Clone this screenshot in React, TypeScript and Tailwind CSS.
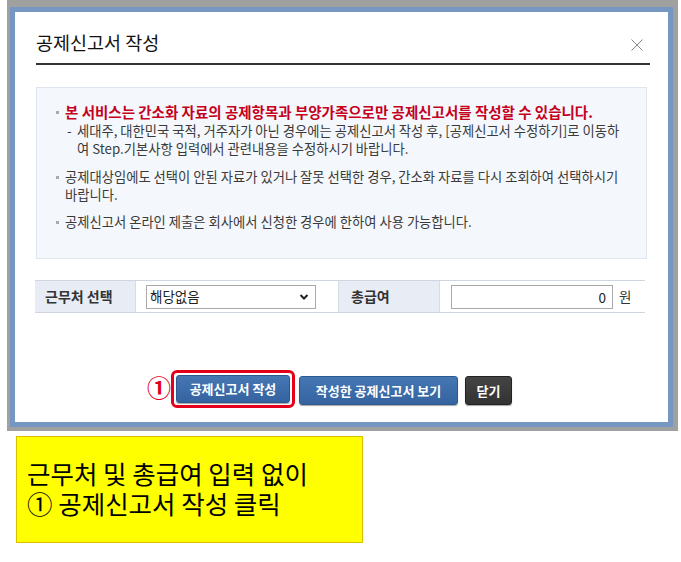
import React from "react";

const font = { fontFamily: '"Noto Sans CJK KR", "Noto Sans", sans-serif' };

export default function App() {
  return (
    <div className="w-[681px] h-[562px] bg-white overflow-hidden" style={font}>
      {/* dimmed page backdrop */}
      <div className="ml-[7px] w-[671px] h-[431px] bg-[#a0a0a0] pt-[7px] pl-[3px]">
        {/* modal */}
        <div className="w-[663px] h-[420px] border-[5px] border-[#7597c1] bg-white flex flex-col">
          {/* header */}
          <div className="h-[51px] flex justify-between items-start pl-[21px] pr-[25px] pt-[19px]">
            <div className="text-[18.5px] leading-[22px] text-[#111]">공제신고서 작성</div>
            <svg width="12" height="12" viewBox="0 0 12 12" className="mt-[8px]">
              <path d="M0.5 0.5 L11.5 11.5 M11.5 0.5 L0.5 11.5" stroke="#8a8a8a" strokeWidth="1" fill="none" />
            </svg>
          </div>
          <div className="ml-[21px] w-[614px] h-[2px] bg-[#333]" />

          {/* info box */}
          <div className="ml-[21px] mt-[22px] w-[611px] h-[172px] bg-[#f4f7fb] border border-[#dfe5ec] pt-[14px] pl-[19px] text-[13.3px] leading-[18px] text-[#3a3a3a]">
            <div className="flex">
              <span className="w-[3px] h-[3px] bg-[#aaa] mt-[9px] mr-[6px] shrink-0" />
              <div>
                <div className="text-[#c4001d] font-bold text-[14.5px] leading-[20px] whitespace-nowrap">
                  본 서비스는 간소화 자료의 공제항목과 부양가족으로만 공제신고서를 작성할 수 있습니다.
                </div>
                <div className="flex pl-[2px] whitespace-nowrap">
                  <span className="w-[10px] shrink-0">-</span>
                  <div>
                    세대주, 대한민국 국적, 거주자가 아닌 경우에는 공제신고서 작성 후, [공제신고서 수정하기]로 이동하
                    <br />
                    여 Step.기본사항 입력에서 관련내용을 수정하시기 바랍니다.
                  </div>
                </div>
              </div>
            </div>
            <div className="flex mt-[10px]">
              <span className="w-[3px] h-[3px] bg-[#aaa] mt-[8px] mr-[6px] shrink-0" />
              <div className="whitespace-nowrap">
                공제대상임에도 선택이 안된 자료가 있거나 잘못 선택한 경우, 간소화 자료를 다시 조회하여 선택하시기
                <br />
                바랍니다.
              </div>
            </div>
            <div className="flex mt-[9px]">
              <span className="w-[3px] h-[3px] bg-[#aaa] mt-[8px] mr-[6px] shrink-0" />
              <div className="whitespace-nowrap">
                공제신고서 온라인 제출은 회사에서 신청한 경우에 한하여 사용 가능합니다.
              </div>
            </div>
          </div>

          {/* table row */}
          <div className="ml-[20px] mt-[21px] w-[610px] h-[33px] border-y border-[#cfd6df] flex text-[14px] text-[#333]">
            <div className="w-[101px] bg-[#e8edf5] flex items-center pl-[10px] font-bold border-r border-[#d6dce4]">
              근무처 선택
            </div>
            <div className="w-[203px] flex items-center pl-[10px] border-r border-[#d6dce4]">
              <div className="relative w-[170px] h-[24px]">
                <select
                  defaultValue="none"
                  className="appearance-none w-full h-full border border-[#a9a9a9] bg-white pl-[3px] text-[13.5px] text-[#222] outline-none"
                  style={font}
                >
                  <option value="none">해당없음</option>
                </select>
                <svg width="10" height="8" viewBox="0 0 10 8" className="absolute right-[7px] top-[8px] pointer-events-none">
                  <path d="M1.5 2 L5 5.5 L8.5 2" stroke="#222" strokeWidth="2" fill="none" />
                </svg>
              </div>
            </div>
            <div className="w-[101px] bg-[#e8edf5] flex items-center pl-[12px] font-bold border-r border-[#d6dce4]">
              총급여
            </div>
            <div className="flex-1 flex items-center pl-[11px]">
              <input
                readOnly
                value="0"
                className="w-[162px] h-[24px] border border-[#a9a9a9] text-right pr-[6px] text-[13.5px] text-[#222] outline-none"
                style={font}
              />
              <span className="ml-[6px] text-[13.5px] text-[#333]">원</span>
            </div>
          </div>

          {/* buttons */}
          <div className="mt-[57px] flex justify-center items-start">
            <div className="relative border-[3px] border-[#e3001b] rounded-[6px] p-[2px]">
              <span className="absolute right-full mr-[3px] top-[-1px] text-[#e3001b] font-bold text-[24px] leading-[30px]">
                ①
              </span>
              <button className="w-[114px] h-[28px] rounded-[3px] bg-gradient-to-b from-[#4677b3] to-[#3463a0] border border-[#2c5990] shadow-[0_1px_1px_rgba(0,0,0,0.35)] text-white font-bold text-[13px]">
                공제신고서 작성
              </button>
            </div>
            <button className="ml-[4px] mt-[6px] w-[159px] h-[29px] rounded-[3px] bg-gradient-to-b from-[#4677b3] to-[#3463a0] border border-[#2c5990] shadow-[0_1px_1px_rgba(0,0,0,0.35)] text-white font-bold text-[13px]">
              작성한 공제신고서 보기
            </button>
            <button className="ml-[7px] mt-[6px] w-[47px] h-[29px] rounded-[3px] bg-gradient-to-b from-[#444] to-[#333] border border-[#222] shadow-[0_1px_1px_rgba(0,0,0,0.35)] text-white font-bold text-[13px]">
              닫기
            </button>
          </div>
        </div>
      </div>

      {/* annotation */}
      <div className="ml-[16px] mt-[5px] w-[347px] h-[107px] bg-[#ffff00] border border-[#d8c000] pt-[21px] pl-[10px] text-[25.5px] leading-[30px] text-black">
        <div>근무처 및 총급여 입력 없이</div>
        <div>① 공제신고서 작성 클릭</div>
      </div>
    </div>
  );
}
